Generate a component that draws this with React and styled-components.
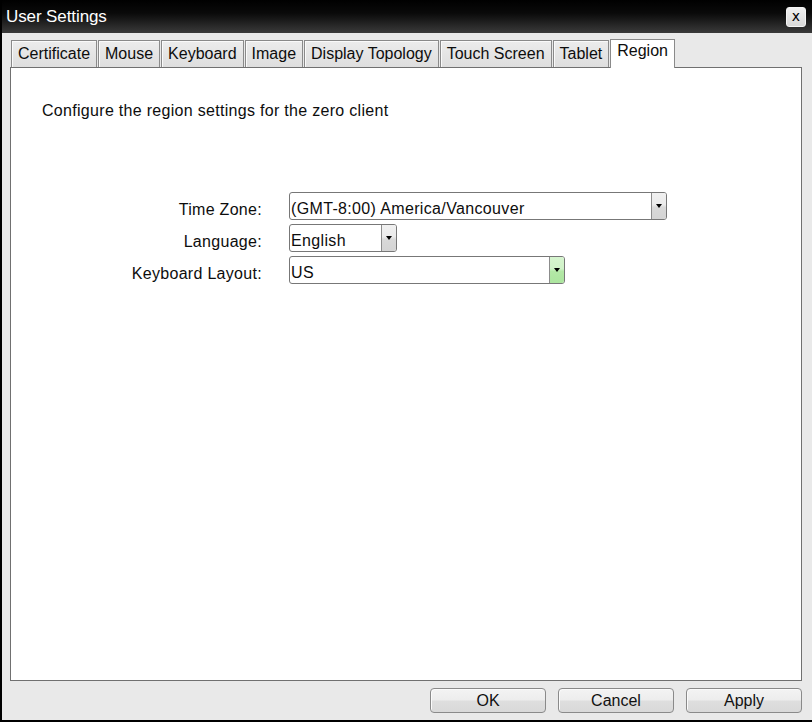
import React from "react";
import styled, { createGlobalStyle } from "styled-components";

const GlobalStyle = createGlobalStyle`
  *, *::before, *::after { box-sizing: border-box; }
  html, body { margin: 0; padding: 0; background: #000; }
  body { font-family: "Liberation Sans", Arial, sans-serif; font-size: 16px; color: #0d0d0d; }
`;

const Window = styled.div`
  width: 812px;
  height: 722px;
  display: flex;
  flex-direction: column;
  background: #e9e9e9;
  border-left: 2px solid #000;
  border-bottom: 2px solid #000;
  overflow: hidden;
`;

const TitleBar = styled.div`
  height: 33px;
  flex: none;
  display: flex;
  align-items: center;
  justify-content: space-between;
  margin-left: -2px;
  padding: 0 6px 0 6px;
  background: linear-gradient(#000 0%, #0a0a0a 40%, #3a3a3a 100%);
`;

const Title = styled.span`
  color: #fff;
  font-size: 17px;
  line-height: 20px;
  margin-top: 1px;
  letter-spacing: -0.1px;
`;

const CloseButton = styled.button`
  width: 20px;
  height: 20px;
  margin-top: 1px;
  padding: 0 0 3px;
  display: flex;
  align-items: center;
  justify-content: center;
  border: 1px solid #f4f4f4;
  border-radius: 3px;
  background: linear-gradient(#f0f0f0, #d9d9d9);
  font-family: "DejaVu Sans", sans-serif;
  font-size: 14px;
  line-height: 1;
  color: #000;
`;

const Body = styled.div`
  flex: 1;
  display: flex;
  flex-direction: column;
  padding: 6px 10px 0 8px;
  min-height: 0;
`;

const TabRow = styled.div`
  display: flex;
  align-items: flex-end;
  gap: 1px;
  padding-left: 1px;
  height: 28px;
  flex: none;
`;

const Tab = styled.div`
  position: relative;
  height: ${(p) => (p.$active ? "29px" : "27px")};
  margin-bottom: ${(p) => (p.$active ? "-1px" : "0")};
  z-index: ${(p) => (p.$active ? 2 : 0)};
  padding: ${(p) => (p.$active ? "1px 6px 0" : "3px 6px 0")};
  border: 1px solid #8a8a8a;
  border-bottom: none;
  background: ${(p) => (p.$active ? "#fff" : "linear-gradient(#ececec, #dedede)")};
  box-shadow: ${(p) => (p.$active ? "none" : "inset 1px 1px 0 #fafafa")};
  font-size: 16px;
  line-height: 20px;
  white-space: nowrap;
`;

const Panel = styled.div`
  flex: 1;
  min-height: 0;
  background: #fff;
  border: 1px solid #707070;
  padding: 34px 0 0 31px;
`;

const Description = styled.p`
  margin: 0;
  font-size: 16px;
  line-height: 18px;
  letter-spacing: 0.3px;
`;

const Form = styled.div`
  margin-top: 72px;
  display: grid;
  grid-template-columns: 220px auto;
  column-gap: 27px;
  row-gap: 4px;
  align-items: start;
  justify-content: start;
`;

const Label = styled.label`
  text-align: right;
  font-size: 16px;
  line-height: 18px;
  padding-top: 9px;
  letter-spacing: 0.3px;
`;

const Select = styled.div`
  width: ${(p) => p.$width}px;
  height: 28px;
  display: flex;
  border: 1px solid #777;
  border-radius: 3px;
  background: #fff;
  overflow: hidden;
`;

const SelectValue = styled.span`
  flex: 1;
  padding: 7px 0 0 1px;
  font-size: 16px;
  line-height: 18px;
  letter-spacing: 0.35px;
  white-space: nowrap;
  overflow: hidden;
`;

const ArrowBox = styled.span`
  width: 15px;
  flex: none;
  display: flex;
  justify-content: center;
  padding-top: 11px;
  border-left: 1px solid #8c8c8c;
  background: ${(p) =>
    p.$focus
      ? "linear-gradient(#d6f5cf 0%, #d0f2c8 45%, #b3e8a6 55%, #ace59f 100%)"
      : "linear-gradient(#f0f0f0 0%, #ebebeb 45%, #d9d9d9 55%, #d4d4d4 100%)"};
`;

const Arrow = styled.span`
  width: 0;
  height: 0;
  border-left: 3.5px solid transparent;
  border-right: 3.5px solid transparent;
  border-top: 4px solid #000;
`;

const Footer = styled.div`
  flex: none;
  display: flex;
  justify-content: flex-end;
  gap: 12px;
  padding: 7px 0 7px;
`;

const Button = styled.button`
  width: 116px;
  height: 25px;
  padding: 0;
  border: 1px solid #8a8a8a;
  border-radius: 4px;
  background: linear-gradient(#f3f3f3 0%, #ededed 48%, #dedede 52%, #d9d9d9 100%);
  box-shadow: inset 1px 1px 0 #fbfbfb;
  font-family: "Liberation Sans", Arial, sans-serif;
  font-size: 16px;
  line-height: 20px;
  color: #111;
`;

const tabs = [
  "Certificate",
  "Mouse",
  "Keyboard",
  "Image",
  "Display Topology",
  "Touch Screen",
  "Tablet",
  "Region",
];

const fields = [
  { label: "Time Zone:", value: "(GMT-8:00) America/Vancouver", width: 378 },
  { label: "Language:", value: "English", width: 108 },
  { label: "Keyboard Layout:", value: "US", width: 276, focus: true },
];

export default function App() {
  return (
    <>
      <GlobalStyle />
      <Window>
        <TitleBar>
          <Title>User Settings</Title>
          <CloseButton aria-label="Close">x</CloseButton>
        </TitleBar>
        <Body>
          <TabRow>
            {tabs.map((t) => (
              <Tab key={t} $active={t === "Region"}>
                {t}
              </Tab>
            ))}
          </TabRow>
          <Panel>
            <Description>Configure the region settings for the zero client</Description>
            <Form>
              {fields.map((f) => (
                <React.Fragment key={f.label}>
                  <Label>{f.label}</Label>
                  <Select $width={f.width}>
                    <SelectValue>{f.value}</SelectValue>
                    <ArrowBox $focus={f.focus}>
                      <Arrow />
                    </ArrowBox>
                  </Select>
                </React.Fragment>
              ))}
            </Form>
          </Panel>
          <Footer>
            <Button>OK</Button>
            <Button>Cancel</Button>
            <Button>Apply</Button>
          </Footer>
        </Body>
      </Window>
    </>
  );
}
